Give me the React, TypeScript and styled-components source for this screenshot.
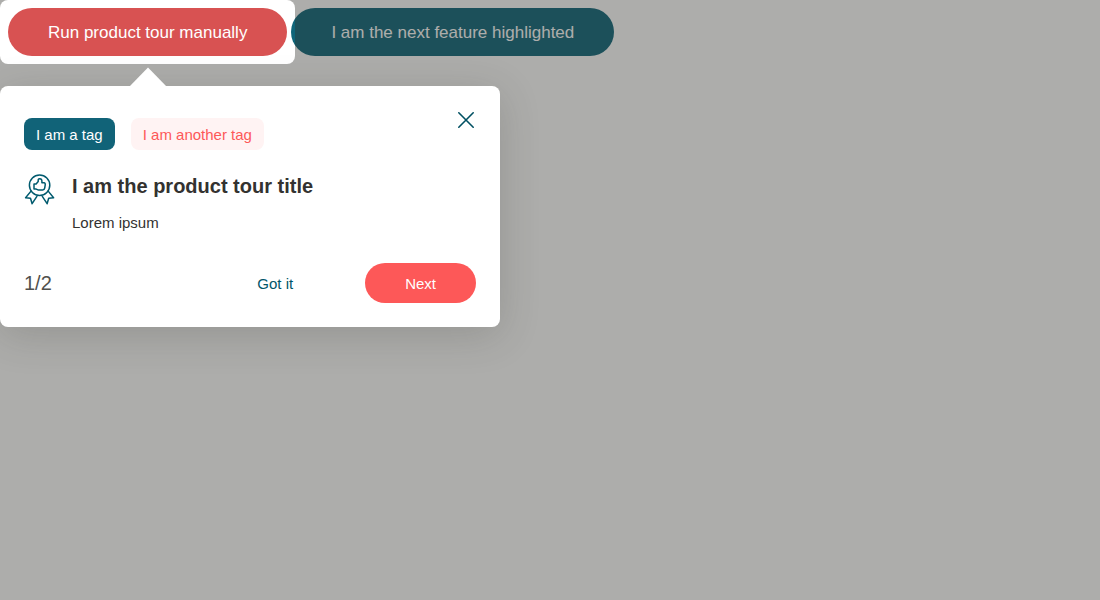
import React from "react";
import styled, { createGlobalStyle } from "styled-components";

const GlobalStyle = createGlobalStyle`
  *, *::before, *::after { box-sizing: border-box; }
  html, body { margin: 0; height: 100%; overflow: hidden; background: #fff; }
  body { font-family: "Liberation Sans", Arial, sans-serif; color: #333230; }
`;

const Page = styled.main`
  position: relative;
  height: 600px;
  overflow: hidden;
`;

const Toolbar = styled.div`
  display: flex;
  gap: 4px;
  padding: 8px;
`;

const FeatureButton = styled.button<{ $background: string }>`
  height: 48px;
  padding: 2px 40px 0;
  border: 0;
  border-radius: 24px;
  background: ${({ $background }) => $background};
  color: #fff;
  font: 17px/24px "Liberation Sans", Arial, sans-serif;
  white-space: nowrap;
`;

const Spotlight = styled.div`
  position: absolute;
  top: 0;
  left: 0;
  width: 295px;
  height: 64px;
  border-radius: 8px;
  box-shadow: 0 0 0 2000px rgba(51, 51, 46, 0.4);
`;

const Popover = styled.section`
  position: absolute;
  top: 86px;
  left: 0;
  width: 500px;
  height: 241px;
  padding: 32px 24px 24px;
  display: flex;
  flex-direction: column;
  border-radius: 8px;
  background: #fff;
  box-shadow: 0 8px 40px rgba(51, 51, 46, 0.2);
`;

const Arrow = styled.svg`
  position: absolute;
  top: -19px;
  left: 129px;
`;

const CloseButton = styled.button`
  position: absolute;
  top: 18px;
  right: 18px;
  width: 32px;
  height: 32px;
  padding: 0;
  border: 0;
  background: none;
  color: #005062;
`;

const Tags = styled.div`
  display: flex;
  gap: 16px;
`;

const Tag = styled.span<{ $tone: "solid" | "soft" }>`
  height: 32px;
  padding: 1px 12px 0;
  border-radius: 8px;
  font-size: 15px;
  line-height: 32px;
  background: ${({ $tone }) => ($tone === "solid" ? "#116378" : "#fff3f3")};
  color: ${({ $tone }) => ($tone === "solid" ? "#fff" : "#fd5858")};
`;

const Content = styled.div`
  display: flex;
  gap: 16px;
  margin-top: 24px;
`;

const AwardIcon = styled.svg`
  flex: none;
  color: #005a6e;
`;

const Title = styled.h2`
  margin: 0;
  font-size: 20px;
  line-height: 24px;
  font-weight: 700;
`;

const Description = styled.p`
  margin: 13px 0 0;
  font-size: 15px;
  line-height: 24px;
`;

const Footer = styled.footer`
  display: flex;
  align-items: center;
  margin-top: auto;
`;

const Counter = styled.span`
  margin-right: auto;
  font-size: 20px;
  line-height: 24px;
  color: #51514d;
`;

const ActionButton = styled.button<{ $primary?: boolean }>`
  height: 40px;
  padding: 1px 40px 0;
  border: 0;
  border-radius: 20px;
  background: ${({ $primary }) => ($primary ? "#fd5858" : "transparent")};
  color: ${({ $primary }) => ($primary ? "#fff" : "#00566a")};
  font: 15px/24px "Liberation Sans", Arial, sans-serif;
  margin-left: ${({ $primary }) => ($primary ? "32px" : "0")};
`;

export default function App() {
  return (
    <Page>
      <GlobalStyle />
      <Toolbar>
        <FeatureButton $background="#d85252">Run product tour manually</FeatureButton>
        <FeatureButton $background="#0e6579">I am the next feature highlighted</FeatureButton>
      </Toolbar>
      <Spotlight />
      <Popover>
        <Arrow width="38" height="20" viewBox="0 0 38 20">
          <path d="M0 20 19 .5 38 20Z" fill="#fff" />
        </Arrow>
        <CloseButton aria-label="Close">
          <svg width="32" height="32" viewBox="0 0 32 32" fill="none" stroke="currentColor" strokeWidth="1.6" strokeLinecap="round">
            <path d="M8.8 8.8 23.2 23.2M23.2 8.8 8.8 23.2" />
          </svg>
        </CloseButton>
        <Tags>
          <Tag $tone="solid">I am a tag</Tag>
          <Tag $tone="soft">I am another tag</Tag>
        </Tags>
        <Content>
          <AwardIcon width="32" height="32" viewBox="0 0 32 32" fill="none" stroke="currentColor" strokeWidth="1.5" strokeLinecap="round" strokeLinejoin="round">
            <circle cx="15.6" cy="11.2" r="10.2" />
            <path d="M10 10H12.1L14.2 7.6V5.9C14.2 4.3 17.9 4.2 17.9 6.8V8.8H20C21.1 8.8 21.4 9.9 21.2 11L20.7 14.2C20.5 15.4 19.8 15.9 18.7 15.9H14L12.2 15.1H10Z" />
            <path d="M6.8 17.4 1.6 23.8 6.5 24.2 8.1 29.7 12.9 22.4M24.4 17.4 29.6 23.8 24.7 24.2 23.1 29.7 18.3 22.4" />
          </AwardIcon>
          <div>
            <Title>I am the product tour title</Title>
            <Description>Lorem ipsum</Description>
          </div>
        </Content>
        <Footer>
          <Counter>1/2</Counter>
          <ActionButton>Got it</ActionButton>
          <ActionButton $primary>Next</ActionButton>
        </Footer>
      </Popover>
    </Page>
  );
}
